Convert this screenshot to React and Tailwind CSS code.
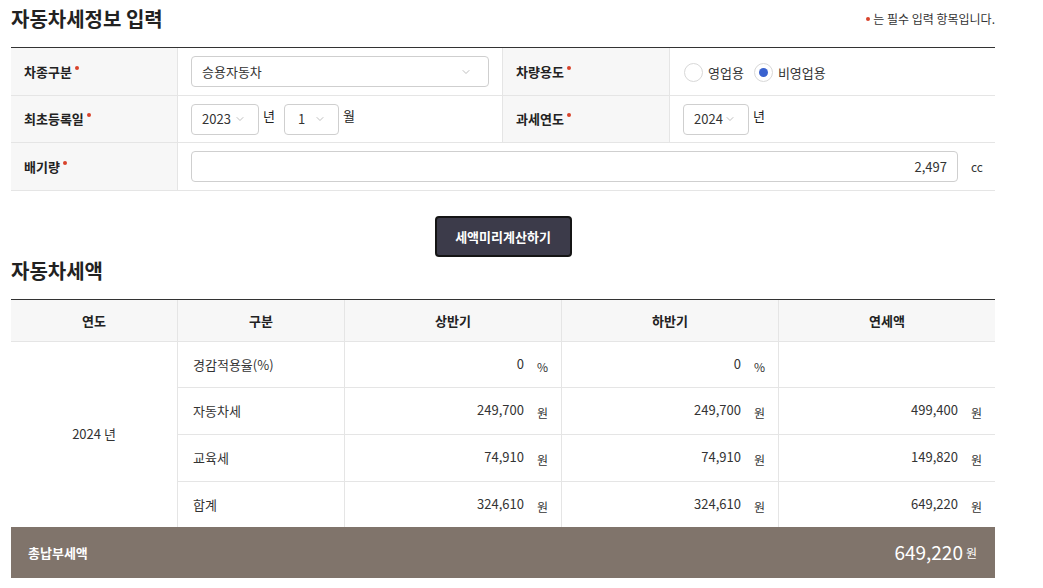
import { ChevronDown } from "lucide-react";

const font = { fontFamily: '"Noto Sans CJK KR", "Noto Sans", sans-serif' };

// Label cell with required dot
const Label = ({ children }) => (
  <div className="flex items-center bg-[#f7f7f7] pl-[13px] text-[13px] font-bold text-[#222]">
    {children}
    <span className="ml-[3px] mb-[8px] inline-block size-[4px] rounded-full bg-[#d8432b]" />
  </div>
);

const SelectBox = ({ value, width }) => (
  <div
    className={`flex h-[31px] items-center justify-between rounded-[4px] border border-[#cfcfcf] bg-white pl-[10px] pr-[12px] text-[13px] text-[#333] ${width}`}
  >
    <span>{value}</span>
    <ChevronDown className="size-[12px] text-[#aaa]" strokeWidth={1.5} />
  </div>
);

const Radio = ({ checked, label }) => (
  <label className="flex items-center gap-[5px] text-[13px] text-[#333]">
    <span className="flex size-[19px] items-center justify-center rounded-full border border-[#d8d8d8] bg-white">
      {checked && <span className="size-[9px] rounded-full bg-[#3a62cf]" />}
    </span>
    {label}
  </label>
);

const Amount = ({ value, unit }) => (
  <div className="flex items-start justify-end pr-[13px] text-[13px] text-[#333]">
    <span>{value}</span>
    <span className="ml-[13px] mt-[4px] w-[11px] text-[12px]">{unit}</span>
  </div>
);

const rows = [
  { name: "경감적용율(%)", first: "0", second: "0", unit: "%", year: "" },
  { name: "자동차세", first: "249,700", second: "249,700", unit: "원", year: "499,400" },
  { name: "교육세", first: "74,910", second: "74,910", unit: "원", year: "149,820" },
  { name: "합계", first: "324,610", second: "324,610", unit: "원", year: "649,220" },
];

export default function App() {
  return (
    <div style={font} className="w-[1043px] bg-white pl-[11px] pr-[48px] pt-[5px] text-[#222]">
      {/* Info header */}
      <div className="flex items-center justify-between">
        <h2 className="text-[20px] font-bold leading-[28px]">자동차세정보 입력</h2>
        <p className="flex items-center text-[12px] text-[#333]">
          <span className="mr-[3px] inline-block size-[4px] rounded-full bg-[#d8432b]" />
          는 필수 입력 항목입니다.
        </p>
      </div>

      {/* Form */}
      <div className="mt-[14px] grid grid-cols-[166px_325px_167px_326px] grid-rows-[47px_47px_48px] border-t border-t-[#333] border-b border-b-[#e5e5e5]">
        <Label>차종구분</Label>
        <div className="flex items-center border-l border-[#e5e5e5] px-[13px]">
          <SelectBox value="승용자동차" width="w-[299px] pr-[16px]" />
        </div>
        <div className="flex items-center border-l border-[#e5e5e5] bg-[#f7f7f7] pl-[13px] text-[13px] font-bold">
          차량용도
          <span className="ml-[3px] mb-[8px] inline-block size-[4px] rounded-full bg-[#d8432b]" />
        </div>
        <div className="flex items-center gap-[10px] border-l border-[#e5e5e5] pl-[14px] pt-[2px]">
          <Radio label="영업용" />
          <Radio checked label="비영업용" />
        </div>

        <div className="col-span-4 grid grid-cols-[166px_325px_167px_326px] border-t border-[#e5e5e5]">
          <Label>최초등록일</Label>
          <div className="flex items-center border-l border-[#e5e5e5] px-[13px]">
            <SelectBox value="2023" width="w-[68px]" />
            <span className="mb-[6px] ml-[4px] mr-[9px] text-[13px]">년</span>
            <SelectBox value="1" width="w-[55px] pl-[13px]" />
            <span className="mb-[6px] ml-[4px] text-[13px]">월</span>
          </div>
          <div className="flex items-center border-l border-[#e5e5e5] bg-[#f7f7f7] pl-[13px] text-[13px] font-bold">
            과세연도
            <span className="ml-[3px] mb-[8px] inline-block size-[4px] rounded-full bg-[#d8432b]" />
          </div>
          <div className="flex items-center border-l border-[#e5e5e5] pl-[13px]">
            <SelectBox value="2024" width="w-[66px]" />
            <span className="mb-[6px] ml-[4px] text-[13px]">년</span>
          </div>
        </div>

        <div className="col-span-4 grid grid-cols-[166px_1fr] border-t border-[#e5e5e5]">
          <Label>배기량</Label>
          <div className="flex items-center border-l border-[#e5e5e5] pl-[13px]">
            <div className="flex h-[31px] w-[767px] items-center justify-end rounded-[4px] border border-[#cfcfcf] pr-[10px] text-[13px] text-[#333]">
              2,497
            </div>
            <span className="ml-[13px] text-[12px] text-[#333]">cc</span>
          </div>
        </div>
      </div>

      {/* Button */}
      <div className="mt-[25px] flex w-[984px] justify-center">
        <button className="h-[41px] w-[137px] rounded-[4px] border-2 border-[#151515] bg-[#3c3b4a] text-[13px] font-bold text-white">
          세액미리계산하기
        </button>
      </div>

      {/* Result */}
      <h2 className="text-[20px] font-bold leading-[28px]">자동차세액</h2>

      <div className="mt-[14px] w-[984px] border-t border-[#333]">
        <div className="grid h-[41px] grid-cols-[166px_167px_217px_217px_217px] bg-[#f7f7f7] text-[13px] font-bold">
          {["연도", "구분", "상반기", "하반기", "연세액"].map((h, i) => (
            <div
              key={h}
              className={`flex items-center justify-center ${i > 0 ? "border-l border-[#e5e5e5]" : ""}`}
            >
              {h}
            </div>
          ))}
        </div>
        <div className="grid grid-cols-[166px_167px_217px_217px_217px] grid-rows-[45px_47px_47px_46px] border-t border-[#e5e5e5] text-[13px]">
          <div className="row-span-4 flex items-center justify-center pb-[2px] text-[#333]">
            2024 년
          </div>
          {rows.map((r, i) => (
            <div
              key={r.name}
              className={`col-span-4 grid grid-cols-[167px_217px_217px_217px] ${i > 0 ? "border-t border-[#e5e5e5]" : ""}`}
            >
              <div className="flex items-center border-l border-[#e5e5e5] pl-[15px] text-[#333]">
                {r.name}
              </div>
              <div className="flex items-center justify-end border-l border-[#e5e5e5]">
                <Amount value={r.first} unit={r.unit} />
              </div>
              <div className="flex items-center justify-end border-l border-[#e5e5e5]">
                <Amount value={r.second} unit={r.unit} />
              </div>
              <div className="flex items-center justify-end border-l border-[#e5e5e5]">
                {r.year && <Amount value={r.year} unit={r.unit} />}
              </div>
            </div>
          ))}
        </div>

        {/* Total */}
        <div className="flex h-[51px] items-center justify-between bg-[#80746b] pl-[17px] pr-[18px] text-white">
          <span className="text-[13px] font-bold">총납부세액</span>
          <span className="flex items-center">
            <span className="text-[19px]">649,220</span>
            <span className="ml-[3px] text-[12px]">원</span>
          </span>
        </div>
      </div>
    </div>
  );
}
